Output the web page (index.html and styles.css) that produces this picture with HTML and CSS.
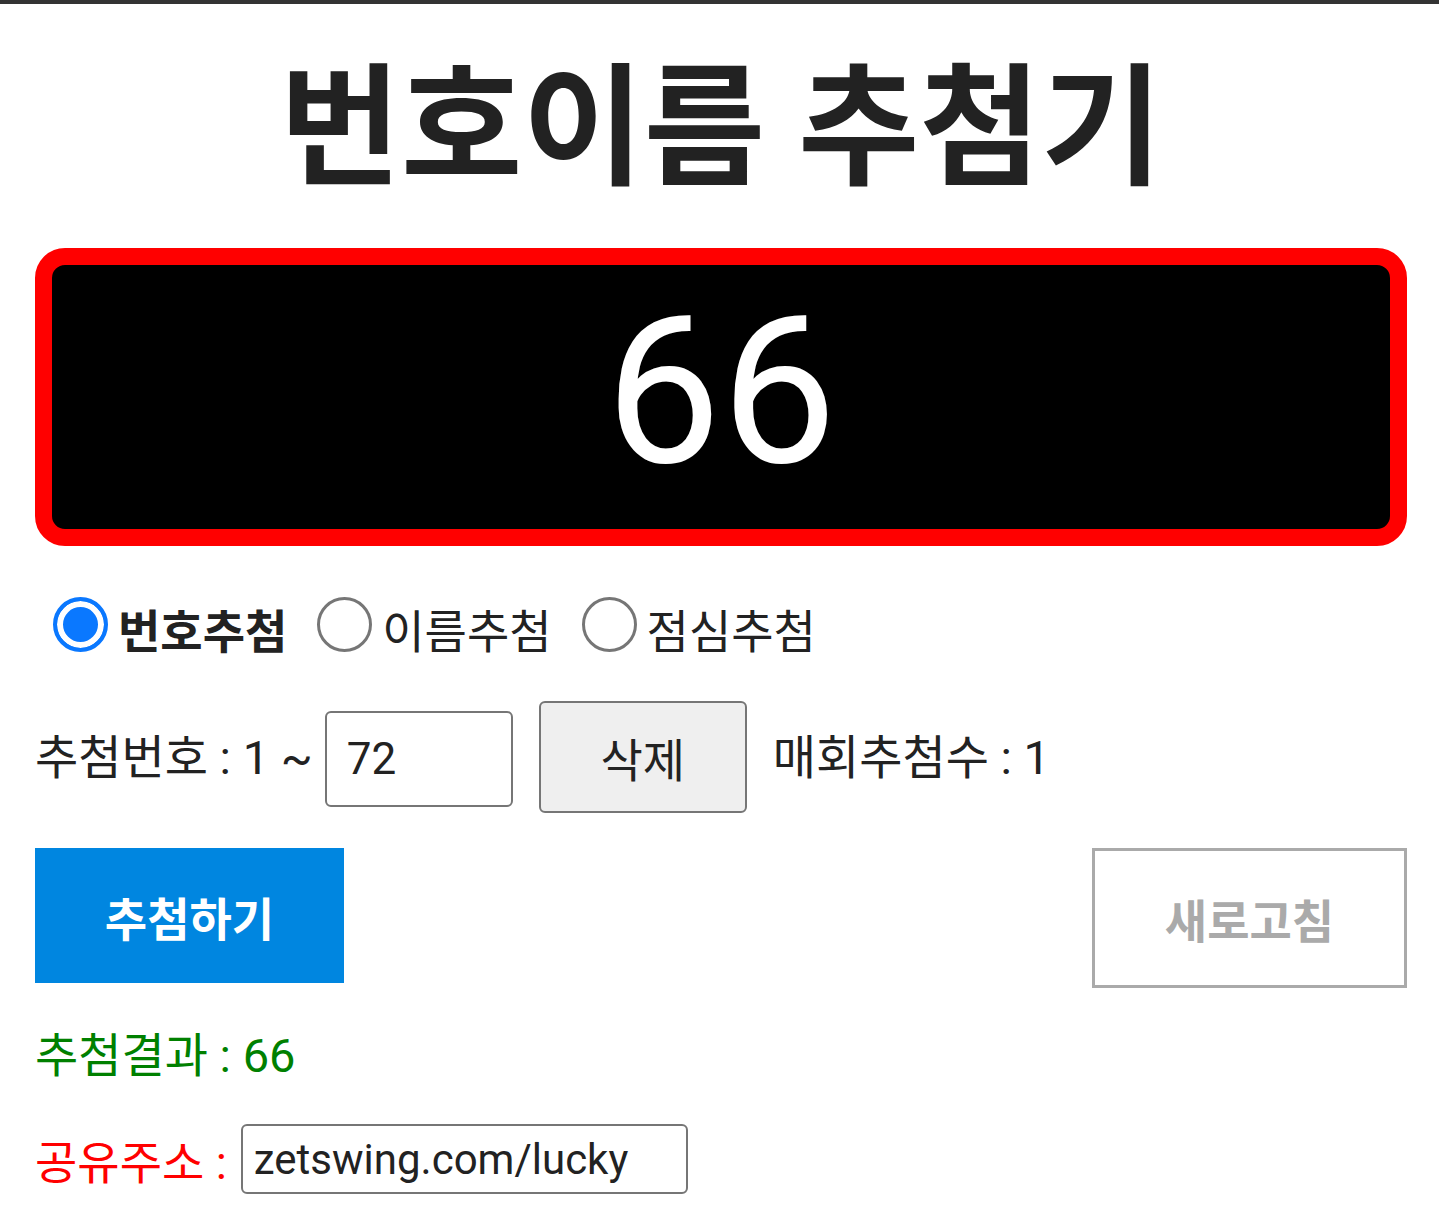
FILE: index.html
```html
<!DOCTYPE html>
<html lang="ko">
<head>
    <meta charset="UTF-8">
    <meta name="viewport" content="width=device-width, initial-scale=1.0">
    <title>번호이름 추첨기</title>
    <link rel="stylesheet" href="styles.css">
</head>
<body>
    <div class="topbar"></div>

    <div class="wrap">
        <h1 class="title">번호이름 추첨기</h1>

        <div class="screen">
            <span id="result">66</span>
        </div>

        <div class="modes">
            <label class="mode mode-on"><input type="radio" name="mode" checked> 번호추첨</label>
            <label class="mode"><input type="radio" name="mode"> 이름추첨</label>
            <label class="mode"><input type="radio" name="mode"> 점심추첨</label>
        </div>

        <div class="range">
            <span class="range-text">추첨번호 : 1 ~</span>
            <input class="field field-num" type="text" value="72">
            <button class="btn-del">삭제</button>
            <span class="range-text">매회추첨수 : 1</span>
        </div>

        <div class="actions">
            <button class="btn-draw">추첨하기</button>
            <button class="btn-reset">새로고침</button>
        </div>

        <p class="outcome">추첨결과 : 66</p>

        <div class="share">
            <span class="share-label">공유주소 :</span>
            <input class="field field-url" type="text" value="zetswing.com/lucky">
        </div>
    </div>
</body>
</html>
```

FILE: styles.css
```css
* {
    box-sizing: border-box;
}

html, body {
    margin: 0;
    background-color: #fff;
    color: #222;
    font-family: Roboto, "Noto Sans CJK KR", sans-serif;
}

.topbar {
    height: 4px;
    background-color: #333;
}

.wrap {
    padding: 0 32px 0 35px;
}

.title {
    margin: 0;
    padding-top: 40px;
    text-align: center;
    font-size: 132px;
    line-height: 170px;
    font-weight: 700;
    color: #222;
}

.screen {
    margin-top: 34px;
    height: 298px;
    border: 17px solid #ff0000;
    border-radius: 30px;
    background-color: #000;
    display: flex;
    justify-content: center;
    align-items: center;
}

#result {
    color: #fff;
    font-family: Roboto, sans-serif;
    font-size: 206px;
    line-height: 1;
    padding-bottom: 10px;
}

.modes {
    display: flex;
    align-items: center;
    gap: 30px;
    margin-top: 49px;
    padding-left: 18px;
}

.mode {
    display: flex;
    align-items: center;
    gap: 10px;
    font-size: 46px;
    color: #222;
}

.mode-on {
    font-weight: 700;
}

.mode input {
    appearance: none;
    margin: 0;
    width: 55px;
    height: 55px;
    border: 3px solid #767676;
    border-radius: 50%;
    background-color: #fff;
    position: relative;
    top: -4px;
}

.mode input:checked {
    border: 4px solid #0a78ff;
    background-color: #0a78ff;
    box-shadow: inset 0 0 0 6px #fff;
}

.range {
    display: flex;
    align-items: center;
    gap: 12px;
    margin-top: 40px;
    font-size: 47px;
    color: #222;
}

.range-text {
    padding-bottom: 8px;
}

.field {
    font-family: Roboto, "Noto Sans CJK KR", sans-serif;
    color: #222;
    border: 2px solid #767676;
    border-radius: 6px;
    background-color: #fff;
    padding: 0 20px;
    outline: none;
}

.field-num {
    width: 188px;
    height: 96px;
    font-size: 44px;
    margin-right: 14px;
    margin-top: 4px;
}

.btn-del {
    width: 208px;
    height: 112px;
    font-family: Roboto, "Noto Sans CJK KR", sans-serif;
    font-size: 46px;
    color: #222;
    background-color: #efefef;
    border: 2px solid #767676;
    border-radius: 6px;
    margin-right: 14px;
}

.actions {
    display: flex;
    justify-content: space-between;
    align-items: flex-start;
    margin-top: 35px;
}

.btn-draw {
    width: 309px;
    height: 135px;
    border: none;
    background-color: #0086e0;
    color: #fff;
    font-family: Roboto, "Noto Sans CJK KR", sans-serif;
    font-size: 46px;
    font-weight: 700;
}

.btn-reset {
    width: 315px;
    height: 140px;
    border: 3px solid #aaa;
    background-color: #fff;
    color: #aaa;
    font-family: Roboto, "Noto Sans CJK KR", sans-serif;
    font-size: 46px;
    font-weight: 700;
}

.outcome {
    margin: 38px 0 0;
    font-size: 47px;
    line-height: 60px;
    color: #008000;
}

.share {
    display: flex;
    align-items: center;
    gap: 14px;
    margin-top: 38px;
}

.share-label {
    font-size: 46px;
    color: #f00;
}

.field-url {
    width: 447px;
    height: 70px;
    flex-shrink: 0;
    font-size: 42px;
    padding: 0 11px;
}
```
